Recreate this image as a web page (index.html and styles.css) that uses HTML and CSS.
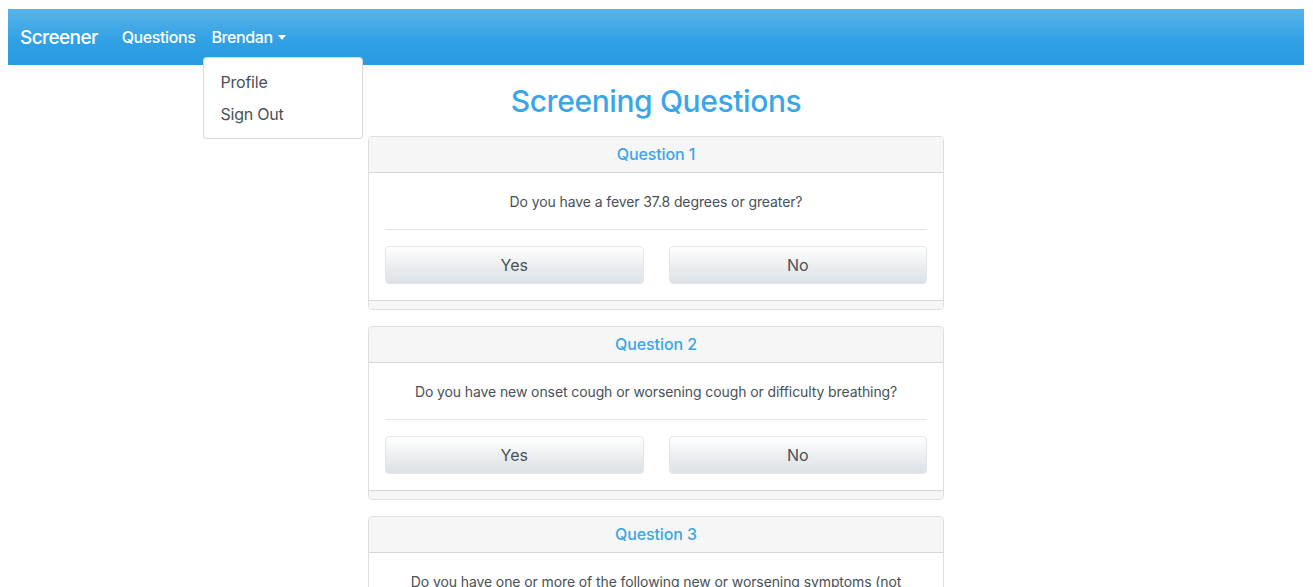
FILE: index.html
```html
<!DOCTYPE html>
<html lang="en">
<head>
<meta charset="utf-8">
<title>Screener</title>
<link rel="stylesheet" href="styles.css">
</head>
<body>
<nav class="navbar">
  <a class="brand" href="#">Screener</a>
  <ul class="nav">
    <li class="nav-item"><a class="nav-link" href="#">Questions</a></li>
    <li class="nav-item dropdown">
      <a class="nav-link" href="#">Brendan<span class="caret"></span></a>
      <div class="dropdown-menu">
        <a class="dropdown-item" href="#">Profile</a>
        <a class="dropdown-item" href="#">Sign Out</a>
      </div>
    </li>
  </ul>
</nav>
<main class="main">
  <h2 class="title">Screening Questions</h2>
  <section class="card">
    <header class="card-header">Question 1</header>
    <div class="card-body">
      <p class="question">Do you have a fever 37.8 degrees or greater?</p>
      <hr class="divider">
      <div class="answers">
        <button class="btn">Yes</button>
        <button class="btn">No</button>
      </div>
    </div>
    <footer class="card-footer"></footer>
  </section>
  <section class="card">
    <header class="card-header">Question 2</header>
    <div class="card-body">
      <p class="question">Do you have new onset cough or worsening cough or difficulty breathing?</p>
      <hr class="divider">
      <div class="answers">
        <button class="btn">Yes</button>
        <button class="btn">No</button>
      </div>
    </div>
    <footer class="card-footer"></footer>
  </section>
  <section class="card">
    <header class="card-header">Question 3</header>
    <div class="card-body">
      <p class="question">Do you have one or more of the following new or worsening symptoms (not related to seasonal allergies or other pre-existing medical conditions)?</p>
      <hr class="divider">
      <div class="answers">
        <button class="btn">Yes</button>
        <button class="btn">No</button>
      </div>
    </div>
    <footer class="card-footer"></footer>
  </section>
</main>
</body>
</html>
```
FILE: styles.css
```css
* { box-sizing: border-box; }
body {
  margin: 9px 9px 8px 8px;
  font-family: Inter, "Noto Sans", "Liberation Sans", sans-serif;
  color: #495057;
  background: #fff;
  font-size: 16px;
  line-height: 1.5;
}
a { text-decoration: none; }

.navbar {
  position: relative;
  display: flex;
  align-items: center;
  height: 56px;
  padding: 0 12px;
  background: linear-gradient(#58b4e9, #2fa0e4 60%, #2a9be2);
  z-index: 2;
}
.brand {
  color: #fff;
  font-size: 19px;
  font-weight: 500;
  letter-spacing: -0.6px;
  margin-right: 24px;
  padding-top: 2px;
}
.nav {
  display: flex;
  list-style: none;
  margin: 0;
  padding: 0;
  gap: 16px;
}
.nav-item { position: relative; }
.nav-link {
  color: #fff;
  font-size: 16px;
  font-weight: 500;
  letter-spacing: -0.4px;
  display: flex;
  align-items: center;
}
.caret {
  display: inline-block;
  margin-left: 5px;
  border-top: 5px solid #fff;
  border-left: 4.5px solid transparent;
  border-right: 4.5px solid transparent;
}
.dropdown-menu {
  position: absolute;
  top: 32px;
  left: -8px;
  width: 160px;
  padding: 8px 0;
  background: #fff;
  border: 1px solid rgba(0,0,0,0.15);
  border-radius: 4px;
}
.dropdown-item {
  display: block;
  padding: 4px 16px;
  color: #495057;
  font-size: 16px;
  line-height: 24px;
  letter-spacing: -0.2px;
}

.main {
  padding-top: 17px;
  display: flex;
  flex-direction: column;
  align-items: center;
}
.title {
  margin: 0 0 16px;
  font-size: 30px;
  line-height: 38px;
  font-weight: 500;
  color: #3aa6e8;
  letter-spacing: -0.4px;
}
.card {
  width: 576px;
  border: 1px solid rgba(0,0,0,0.125);
  border-radius: 4px;
  margin-bottom: 16px;
  overflow: hidden;
}
.card-header {
  background: #f6f6f6;
  border-bottom: 1px solid rgba(0,0,0,0.125);
  text-align: center;
  color: #3aa6e8;
  font-size: 16px;
  font-weight: 500;
  line-height: 19px;
  padding: 8px 16px;
  letter-spacing: -0.1px;
}
.card-body {
  padding: 18px 16px 16px;
  text-align: center;
}
.question {
  margin: 0 0 17px;
  padding: 0 12px;
  font-size: 14px;
  line-height: 21px;
  letter-spacing: -0.1px;
}
.divider {
  margin: 0 0 16px;
  border: 0;
  border-top: 1px solid rgba(0,0,0,0.1);
}
.answers {
  display: grid;
  grid-template-columns: 1fr 1fr;
  gap: 25px;
}
.btn {
  height: 38px;
  font-family: inherit;
  font-size: 16px;
  color: #495057;
  background: linear-gradient(#fff, #e9ecef 60%, #dde2e6);
  border: 1px solid #e3e6e9;
  border-radius: 4px;
  cursor: pointer;
}
.card-footer {
  height: 9px;
  background: #f6f6f6;
  border-top: 1px solid rgba(0,0,0,0.125);
}
```
